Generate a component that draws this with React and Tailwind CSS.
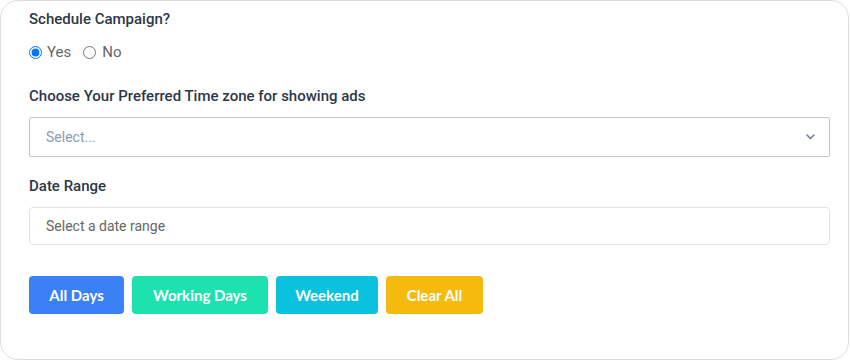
import React, { useState } from 'react';

const buttons = [
  { label: 'All Days', cls: 'w-[95px] bg-[#3c80f6]' },
  { label: 'Working Days', cls: 'w-[136px] bg-[#1de2ad]' },
  { label: 'Weekend', cls: 'w-[102px] bg-[#0ac2dd]' },
  { label: 'Clear All', cls: 'w-[97px] bg-[#f4ba0e]' },
];

const App = () => {
  const [scheduled, setScheduled] = useState('yes');

  return (
    <div className="w-[850px] h-[360px] bg-white font-['Roboto',sans-serif]">
      <div className="h-[360px] w-[849px] border border-[#dedede] rounded-[18px] pl-[28px] pr-[18px] pt-[8px]">
        {/* Schedule toggle */}
        <p className="text-[15px] leading-5 font-medium text-[#2d3748]">Schedule Campaign?</p>
        <div className="mt-[13px] flex items-center h-5 text-[15px] text-[#666]">
          <label className="flex items-center">
            <input
              type="radio"
              name="schedule"
              checked={scheduled === 'yes'}
              onChange={() => setScheduled('yes')}
              className="m-0 w-[13px] h-[13px]"
            />
            <span className="ml-[5px]">Yes</span>
          </label>
          <label className="flex items-center ml-[12px]">
            <input
              type="radio"
              name="schedule"
              checked={scheduled === 'no'}
              onChange={() => setScheduled('no')}
              className="m-0 w-[13px] h-[13px]"
            />
            <span className="ml-[6px]">No</span>
          </label>
        </div>

        {/* Time zone */}
        <p className="mt-[24px] text-[15px] leading-5 font-medium text-[#2d3748]">
          Choose Your Preferred Time zone for showing ads
        </p>
        <div className="mt-[11px] h-[40px] border border-[#c8c8c8] rounded-[2px] flex items-center justify-between pl-[16px] pr-[14px]">
          <span className="text-[14px] text-[#8a9bb3]">Select...</span>
          <svg width="9" height="6" viewBox="0 0 9 6" fill="none">
            <path d="M1 1l3.5 3.5L8 1" stroke="#6b7c93" strokeWidth="1.5" strokeLinecap="round" strokeLinejoin="round" />
          </svg>
        </div>

        {/* Date range */}
        <p className="mt-[19px] text-[15px] leading-5 font-medium text-[#2d3748]">Date Range</p>
        <div className="mt-[11px] h-[38px] border border-[#dfe3ea] rounded-[4px] flex items-center pl-[16px]">
          <span className="text-[14px] text-[#666]">Select a date range</span>
        </div>

        {/* Day presets */}
        <div className="mt-[31px] flex gap-[8px]">
          {buttons.map((b) => (
            <button
              key={b.label}
              type="button"
              className={`${b.cls} h-[38px] rounded-[4px] text-white text-[15px] font-bold font-['Lato',sans-serif]`}
            >
              {b.label}
            </button>
          ))}
        </div>
      </div>
    </div>
  );
};

export default App;
